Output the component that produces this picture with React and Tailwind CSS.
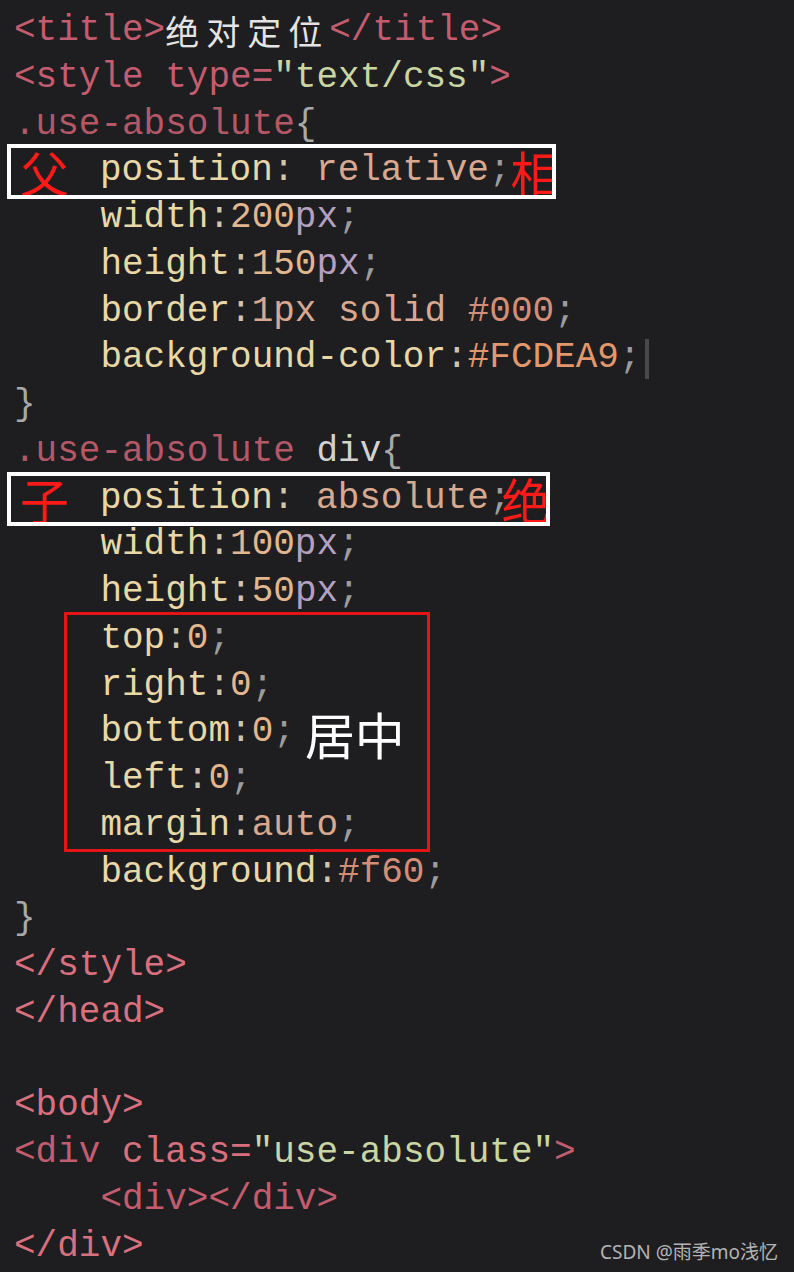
import React from "react";

const C = {
  tag: "#c45c70",
  tagLight: "#d8707f",
  str: "#c9d5a2",
  title: "#e4e4e4",
  sel: "#b45868",
  plain: "#d2d2d2",
  brace: "#a8a8a8",
  prop: "#e8d8a8",
  colon: "#cfc6ae",
  kw: "#d9a890",
  num: "#e2b68e",
  unit: "#b4a0c0",
  semi: "#9c9c9c",
  hex: "#d48e78",
  hexHot: "#e3976c",
};

const IND = "    ";
const cjk = "font-['Noto_Sans_CJK_SC',sans-serif]";

const Code = ({ parts }) =>
  parts.map(([text, color, isCjk], i) => (
    <span
      key={i}
      style={{ color }}
      className={isCjk ? `tracking-[7px] text-[34px] ${cjk}` : ""}
    >
      {text}
    </span>
  ));

const Line = ({ parts = [], children }) => (
  <div className="relative h-[46.75px] whitespace-pre flex items-center">
    <Code parts={parts} />
    {children}
    {parts.length === 0 && !children && " "}
  </div>
);

// a line framed by a white box, with red notes before and after the code
const NoteLine = ({ before, after, parts, width, afterShift }) => (
  <div className="relative h-[46.75px] whitespace-pre flex items-center">
    <span className={`w-[86px] pl-[6px] text-[49px] leading-[44px] text-[#ff1a1a] ${cjk}`}>
      {before}
    </span>
    <Code parts={parts} />
    <span className={`text-[49px] leading-[44px] text-[#ff1a1a] ${cjk} ${afterShift}`}>
      {after}
    </span>
    <div
      className={`absolute -left-[7px] -top-[4px] -bottom-[4px] border-4 border-white pointer-events-none ${width}`}
    />
  </div>
);

export default function App() {
  return (
    <div className="relative w-[794px] h-[1272px] overflow-hidden bg-[#1e1e20]">
      <div className="pt-[8px] pl-[14px] font-['Liberation_Mono',monospace] text-[36px] leading-[46.75px]">
        <Line parts={[["<title>", C.tag], ["绝对定位", C.title, true], ["</title>", C.tag]]} />
        <Line parts={[["<style ", C.tag], ["type=", C.tag], ["\"text/css\"", C.str], [">", C.tag]]} />
        <Line parts={[[".use-absolute", C.sel], ["{", C.brace]]} />
        <NoteLine
          before="父"
          after="相"
          width="w-[549px]"
          afterShift=""
          parts={[["position", C.prop], [": ", C.colon], ["relative", C.kw], [";", C.semi]]}
        />
        <Line parts={[[IND + "width", C.prop], [":", C.colon], ["200", C.num], ["px", C.unit], [";", C.semi]]} />
        <Line parts={[[IND + "height", C.prop], [":", C.colon], ["150", C.num], ["px", C.unit], [";", C.semi]]} />
        <Line parts={[[IND + "border", C.prop], [":", C.colon], ["1px solid ", C.kw], ["#000", C.hex], [";", C.semi]]} />
        <Line parts={[[IND + "background-color", C.prop], [":", C.colon], ["#FCDEA9", C.hexHot], [";", C.semi]]}>
          <span className="ml-[4px] w-[4px] h-[40px] bg-[#4a4a4a]" />
        </Line>
        <Line parts={[["}", C.brace]]} />
        <Line parts={[[".use-absolute ", C.sel], ["div", C.plain], ["{", C.brace]]} />
        <NoteLine
          before="子"
          after="绝"
          width="w-[543px]"
          afterShift="-ml-[9px]"
          parts={[["position", C.prop], [": ", C.colon], ["absolute", C.kw], [";", C.semi]]}
        />
        <Line parts={[[IND + "width", C.prop], [":", C.colon], ["100", C.num], ["px", C.unit], [";", C.semi]]} />
        <Line parts={[[IND + "height", C.prop], [":", C.colon], ["50", C.num], ["px", C.unit], [";", C.semi]]} />

        {/* centring block, framed in red */}
        <div className="relative">
          <Line parts={[[IND + "top", C.prop], [":", C.colon], ["0", C.num], [";", C.semi]]} />
          <Line parts={[[IND + "right", C.prop], [":", C.colon], ["0", C.num], [";", C.semi]]} />
          <Line parts={[[IND + "bottom", C.prop], [":", C.colon], ["0", C.num], [";", C.semi]]}>
            <span className={`ml-[10px] text-[50px] leading-[44px] text-white ${cjk}`}>居中</span>
          </Line>
          <Line parts={[[IND + "left", C.prop], [":", C.colon], ["0", C.num], [";", C.semi]]} />
          <Line parts={[[IND + "margin", C.prop], [":", C.colon], ["auto", C.kw], [";", C.semi]]} />
          <div className="absolute left-[50px] -top-[4px] w-[366px] h-[240px] border-[3px] border-[#e51515] pointer-events-none" />
        </div>

        <Line parts={[[IND + "background", C.prop], [":", C.colon], ["#f60", C.hex], [";", C.semi]]} />
        <Line parts={[["}", C.brace]]} />
        <Line parts={[["</style>", C.tagLight]]} />
        <Line parts={[["</head>", C.tagLight]]} />
        <Line />
        <Line parts={[["<body>", C.tagLight]]} />
        <Line parts={[["<div ", C.tag], ["class=", C.tagLight], ["\"use-absolute\"", C.str], [">", C.tag]]} />
        <Line parts={[[IND + "<div></div>", C.tag]]} />
        <Line parts={[["</div>", C.tagLight]]} />
      </div>

      <span className="absolute right-[16px] bottom-[10px] text-[19px] leading-none text-[#b4b4b4] font-['Noto_Sans','Noto_Sans_CJK_SC',sans-serif]">
        CSDN @雨季mo浅忆
      </span>
    </div>
  );
}
